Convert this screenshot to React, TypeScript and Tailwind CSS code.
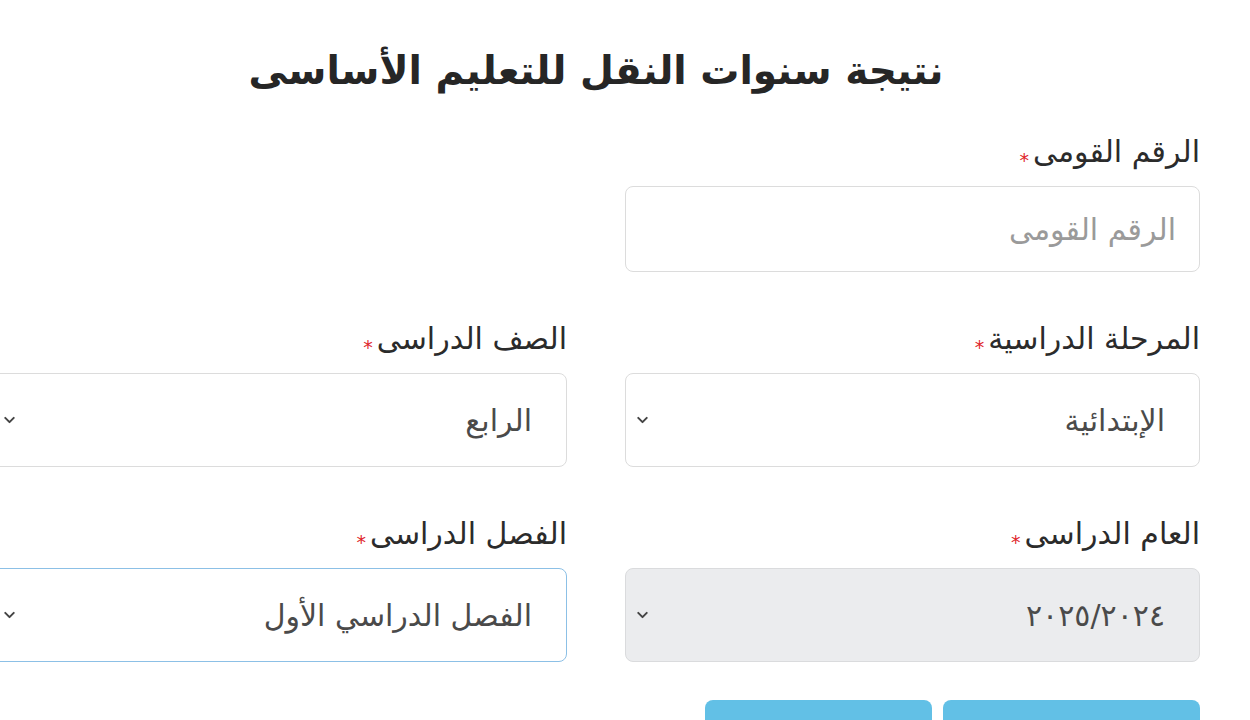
import { ChevronDown } from "lucide-react";

const font = { fontFamily: '"DejaVu Sans", sans-serif' };

const Label = ({ text }: { text: string }) => (
  <label className="flex items-center gap-1 h-9 mb-4 text-[30px] leading-9 text-[#2b2b2b]">
    <span>{text}</span>
    <span className="text-[#e0262b] text-[19px] leading-none mt-4">*</span>
  </label>
);

const SelectBox = ({
  value,
  disabled,
  focused,
}: {
  value: string;
  disabled?: boolean;
  focused?: boolean;
}) => (
  <div
    className={
      "relative h-[94px] rounded-lg border flex items-center pr-[34px] text-[30px] text-[#4a4a4a] " +
      (disabled ? "bg-[#ebecee] border-[#dadbdd] " : "bg-white ") +
      (focused ? "border-[#8cc0e6]" : disabled ? "" : "border-[#dcdcdc]")
    }
  >
    <span>{value}</span>
    <ChevronDown
      size={17}
      strokeWidth={2.8}
      className="absolute left-[8px] top-1/2 -translate-y-1/2 text-[#444]"
    />
  </div>
);

export default function App() {
  return (
    <div className="w-full h-screen bg-white overflow-hidden" style={font}>
      <div dir="rtl" className="w-[1208px] ml-[-8px]">
        <h1 className="text-center font-bold text-[39px] leading-[60px] text-[#262626] pt-[41px] pb-[33px]">
          نتيجة سنوات النقل للتعليم الأساسى
        </h1>

        <div className="grid grid-cols-2 gap-x-[58px] gap-y-[49px]">
          <div>
            <Label text="الرقم القومى" />
            <input
              className="w-full h-[86px] rounded-lg border border-[#dcdcdc] bg-white px-[23px] text-[30px] text-[#4a4a4a] placeholder:text-[#9a9a9a] outline-none"
              placeholder="الرقم القومى"
            />
          </div>
          <div />

          <div>
            <Label text="المرحلة الدراسية" />
            <SelectBox value="الإبتدائية" />
          </div>
          <div>
            <Label text="الصف الدراسى" />
            <SelectBox value="الرابع" />
          </div>

          <div>
            <Label text="العام الدراسى" />
            <SelectBox value="٢٠٢٥/٢٠٢٤" disabled />
          </div>
          <div>
            <Label text="الفصل الدراسى" />
            <SelectBox value="الفصل الدراسي الأول" focused />
          </div>
        </div>

        {/* action buttons, only their top edge is in view */}
        <div className="flex gap-[11px] mt-[38px]">
          <button aria-label="عرض النتيجة" className="w-[257px] h-[56px] rounded-lg bg-[#62c0e6]" />
          <button aria-label="مسح" className="w-[227px] h-[56px] rounded-lg bg-[#62c0e6]" />
        </div>
      </div>
    </div>
  );
}
